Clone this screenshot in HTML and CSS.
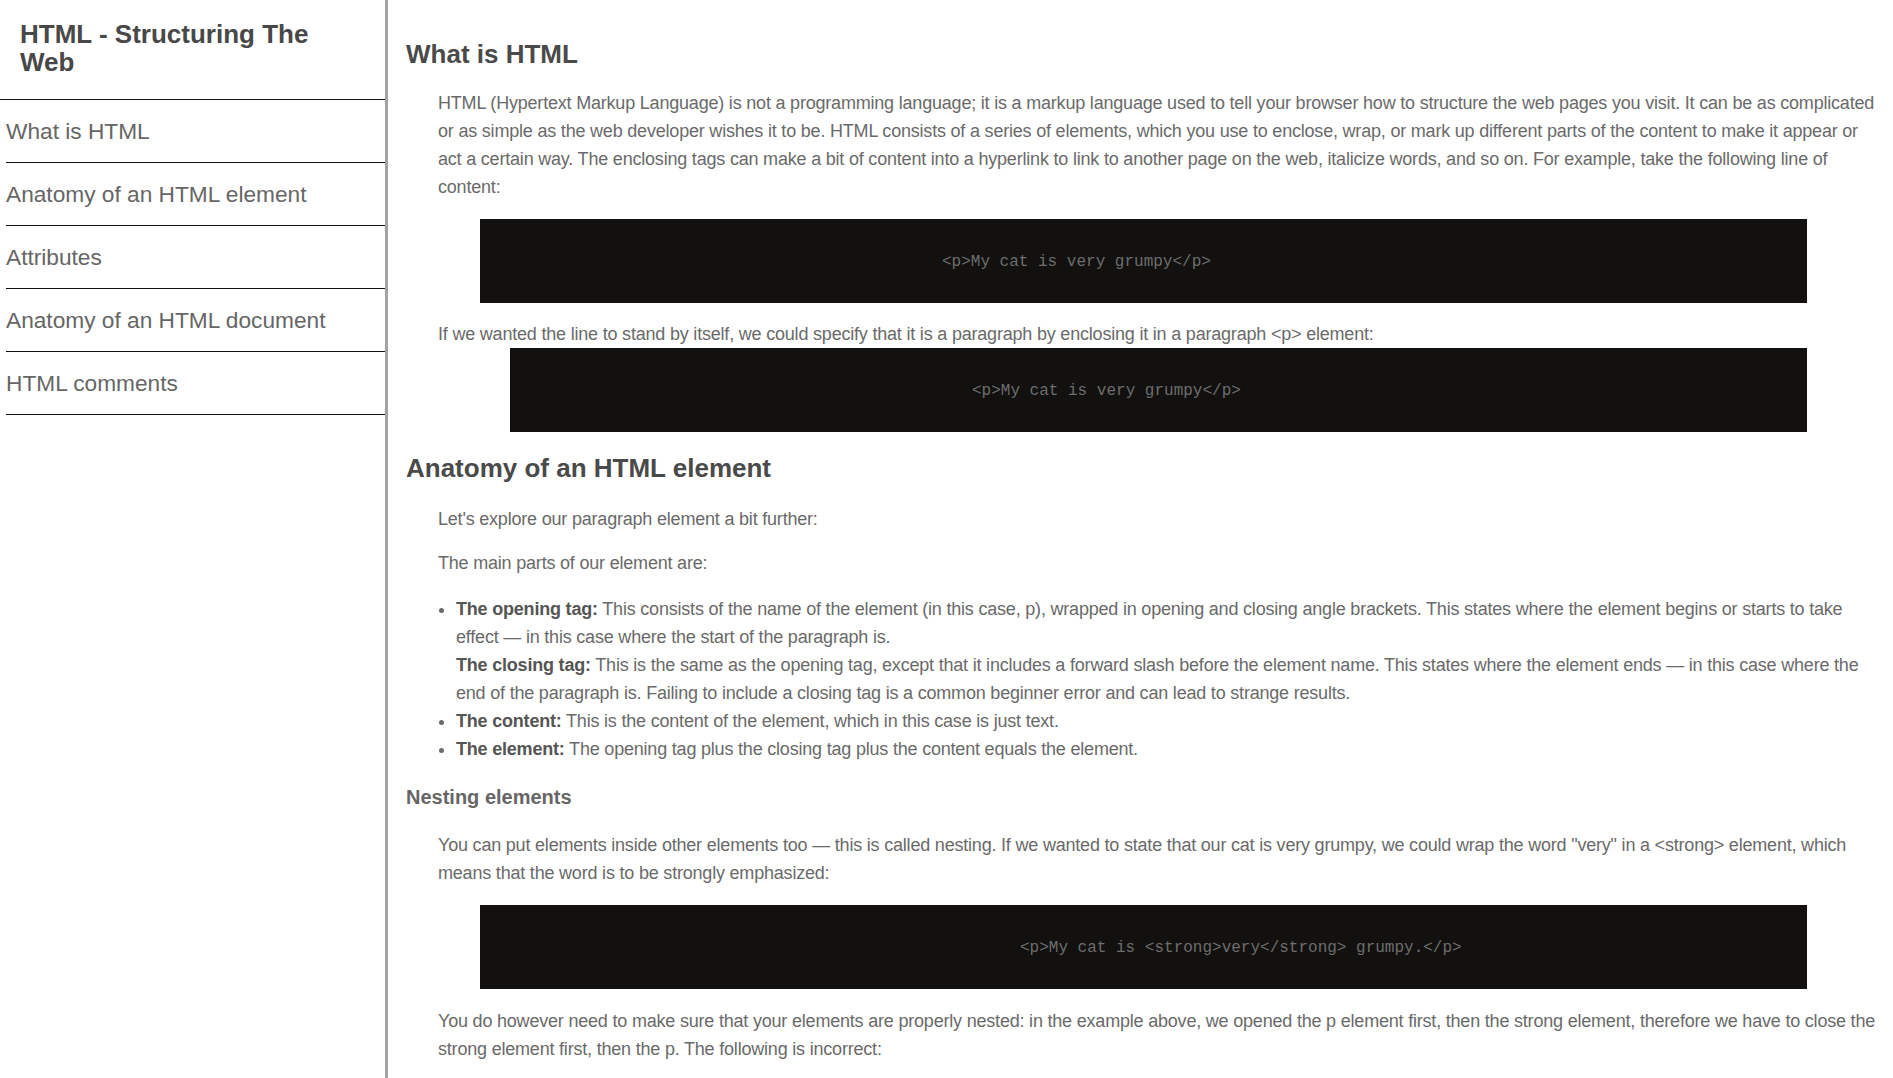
FILE: index.html
```html
<!DOCTYPE html>
<html lang="en">
<head>
<meta charset="utf-8">
<title>HTML - Structuring The Web</title>
<link rel="stylesheet" href="styles.css">
</head>
<body>
<aside class="sidebar">
  <header class="side-head">
    <h1 class="side-title">HTML - Structuring The Web</h1>
  </header>
  <nav>
    <ul class="nav-list">
      <li class="nav-item">What is HTML</li>
      <li class="nav-item">Anatomy of an HTML element</li>
      <li class="nav-item">Attributes</li>
      <li class="nav-item">Anatomy of an HTML document</li>
      <li class="nav-item">HTML comments</li>
    </ul>
  </nav>
</aside>
<main class="content">
  <section class="section">
    <h2 class="sec-title first">What is HTML</h2>
    <p class="para">HTML (Hypertext Markup Language) is not a programming language; it is a markup language used to tell your browser how to structure the web pages you visit. It can be as complicated or as simple as the web developer wishes it to be. HTML consists of a series of elements, which you use to enclose, wrap, or mark up different parts of the content to make it appear or act a certain way. The enclosing tags can make a bit of content into a hyperlink to link to another page on the web, italicize words, and so on. For example, take the following line of content:</p>
    <pre class="code">&lt;p&gt;My cat is very grumpy&lt;/p&gt;</pre>
    <p class="para snug">If we wanted the line to stand by itself, we could specify that it is a paragraph by enclosing it in a paragraph &lt;p&gt; element:</p>
    <pre class="code shifted">&lt;p&gt;My cat is very grumpy&lt;/p&gt;</pre>
  </section>
  <section class="section">
    <h2 class="sec-title">Anatomy of an HTML element</h2>
    <p class="para lead">Let's explore our paragraph element a bit further:</p>
    <p class="para follow">The main parts of our element are:</p>
    <ul class="parts">
      <li><strong class="term">The opening tag:</strong> This consists of the name of the element (in this case, p), wrapped in opening and closing angle brackets. This states where the element begins or starts to take effect — in this case where the start of the paragraph is.<br><strong class="term">The closing tag:</strong> This is the same as the opening tag, except that it includes a forward slash before the element name. This states where the element ends — in this case where the end of the paragraph is. Failing to include a closing tag is a common beginner error and can lead to strange results.</li>
      <li><strong class="term">The content:</strong> This is the content of the element, which in this case is just text.</li>
      <li><strong class="term">The element:</strong> The opening tag plus the closing tag plus the content equals the element.</li>
    </ul>
    <h3 class="sub-title">Nesting elements</h3>
    <p class="para">You can put elements inside other elements too — this is called nesting. If we wanted to state that our cat is very grumpy, we could wrap the word "very" in a &lt;strong&gt; element, which means that the word is to be strongly emphasized:</p>
    <pre class="code wide">&lt;p&gt;My cat is &lt;strong&gt;very&lt;/strong&gt; grumpy.&lt;/p&gt;</pre>
    <p class="para">You do however need to make sure that your elements are properly nested: in the example above, we opened the p element first, then the strong element, therefore we have to close the strong element first, then the p. The following is incorrect:</p>
    <pre class="code wide">&lt;p&gt;My cat is &lt;strong&gt;very grumpy.&lt;/p&gt;&lt;/strong&gt;</pre>
  </section>
</main>
</body>
</html>
```
FILE: styles.css
```css
html, body {
  margin: 0;
  padding: 0;
  background: #ffffff;
}

body {
  display: flex;
  align-items: stretch;
  font-family: "Liberation Sans", Arial, sans-serif;
  color: #666666;
  min-height: 100vh;
}

.sidebar {
  flex: 0 0 385px;
  width: 385px;
  border-right: 3px solid #a3a3a3;
  min-height: 100vh;
}

.side-head {
  padding: 20px 20px 23px 20px;
  border-bottom: 1px solid #111111;
}

.side-title {
  margin: 0;
  font-size: 26px;
  line-height: 28px;
  font-weight: bold;
  color: #484848;
}

.nav-list {
  list-style: none;
  margin: 0 0 0 6px;
  padding: 0;
}

.nav-item {
  height: 62px;
  line-height: 62px;
  font-size: 22.7px;
  color: #666666;
  border-bottom: 1px solid #111111;
  white-space: nowrap;
}

.content {
  flex: 1 1 auto;
  min-width: 0;
  padding: 0 16px 0 18px;
}

.sec-title {
  margin: 21px 0 22px 0;
  font-size: 26px;
  line-height: 30px;
  font-weight: bold;
  color: #4a4a4a;
}

.sec-title.first {
  margin-top: 39px;
  margin-bottom: 20px;
}

.para {
  margin: 18px 0;
  padding-left: 32px;
  font-size: 18px;
  line-height: 28px;
  letter-spacing: -0.2px;
  color: #6a6a6a;
}

.para.lead {
  margin-bottom: 16px;
}

.para.follow {
  margin-top: 16px;
  margin-bottom: 18px;
}

.para.snug {
  margin: 17px 0 0 0;
}

.code {
  margin: 0 70px 0 74px;
  padding: 33px 0 31px 462px;
  background: #121110;
  color: #6d6d6d;
  font-family: "Liberation Mono", "DejaVu Sans Mono", monospace;
  font-size: 16px;
  line-height: 20px;
  white-space: pre;
  overflow: hidden;
}

.code.shifted {
  margin-left: 104px;
}

.code.wide {
  padding-left: 540px;
}

.parts {
  margin: 18px 0 22px 0;
  padding-left: 50px;
  font-size: 18px;
  line-height: 28px;
  letter-spacing: -0.2px;
  color: #6a6a6a;
}

.term {
  font-weight: bold;
  color: #555555;
}

.sub-title {
  margin: 22px 0;
  font-size: 20px;
  line-height: 24px;
  font-weight: bold;
  color: #666666;
}
```
